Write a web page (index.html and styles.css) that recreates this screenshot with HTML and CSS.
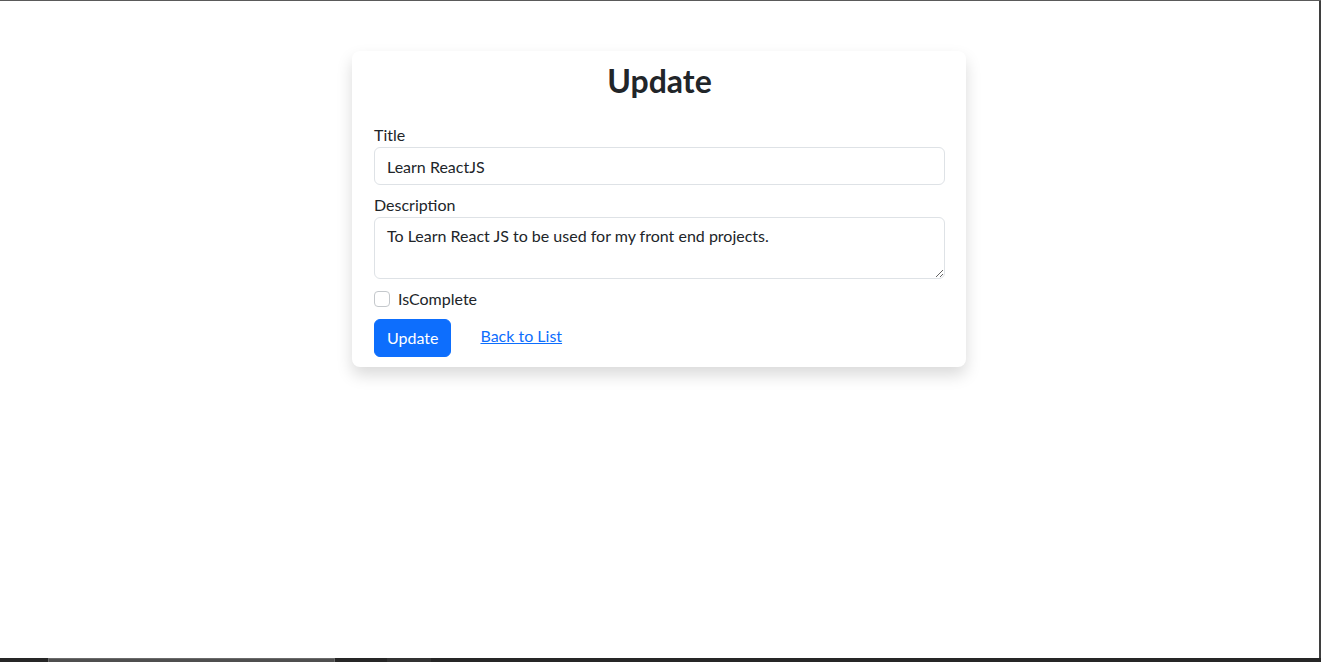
FILE: index.html
```html
<!DOCTYPE html>
<html lang="en">
<head>
<meta charset="utf-8">
<title>Update</title>
<link rel="stylesheet" href="styles.css">
</head>
<body>
<div class="screen">
  <main class="page">
    <section class="card">
      <h2 class="card-title">Update</h2>
      <form class="form">
        <div class="field">
          <label class="label" for="title">Title</label>
          <input class="control" id="title" type="text" value="Learn ReactJS">
        </div>
        <div class="field">
          <label class="label" for="desc">Description</label>
          <textarea class="control area" id="desc">To Learn React JS to be used for my front end projects.</textarea>
        </div>
        <div class="check">
          <input class="check-box" id="done" type="checkbox">
          <label class="check-label" for="done">IsComplete</label>
        </div>
        <div class="actions">
          <button class="btn btn-primary" type="button">Update</button>
          <a class="btn btn-link" href="#">Back to List</a>
        </div>
      </form>
    </section>
  </main>
  <div class="taskbar">
    <span class="seg seg-a"></span>
    <span class="seg seg-b"></span>
    <span class="seg seg-c"></span>
    <span class="seg seg-d"></span>
    <span class="seg seg-e"></span>
  </div>
</div>
</body>
</html>
```
FILE: styles.css
```css
* { box-sizing: border-box; }
html, body { margin: 0; padding: 0; height: 100%; }
body {
  font-family: Lato, "Open Sans", sans-serif;
  font-size: 16px;
  line-height: 1.5;
  color: #212529;
  background: #fff;
}
.screen {
  height: 662px;
  display: flex;
  flex-direction: column;
  border-top: 1px solid #5a5a5a;
}
.page {
  flex: 1;
  display: flex;
  justify-content: center;
  align-items: flex-start;
  border-right: 2px solid #3f3f3f;
  padding-top: 50px;
}
.card {
  width: 614px;
  margin-right: 1px;
  background: #fff;
  border-radius: 8px;
  box-shadow: 0 .5rem 1rem rgba(0,0,0,.15);
  padding: 11px 21px 10px 22px;
}
.card-title {
  margin: 0 0 23px;
  text-align: center;
  font-size: 32px;
  font-weight: 700;
  line-height: 1.2;
}
.form { display: flex; flex-direction: column; }
.field { margin-bottom: 8px; display: flex; flex-direction: column; }
.label { display: block; line-height: 24px; }
.control {
  display: block;
  width: 100%;
  height: 38px;
  padding: 6px 12px;
  font: inherit;
  color: #212529;
  background: #fff;
  border: 1px solid #dee2e6;
  border-radius: 6px;
  outline: none;
}
.area { height: 62px; resize: vertical; }
.check {
  display: flex;
  align-items: center;
  height: 24px;
  margin-bottom: 8px;
}
.check-box {
  appearance: none;
  -webkit-appearance: none;
  width: 16px;
  height: 16px;
  margin: 0 8px 0 0;
  border: 1px solid #c4c8cc;
  border-radius: 4px;
  background: #fff;
}
.check-label { line-height: 24px; }
.actions { display: flex; align-items: center; }
.btn {
  display: inline-block;
  font: inherit;
  line-height: 24px;
  padding: 6px 12px;
  border: 1px solid transparent;
  border-radius: 6px;
}
.btn-primary { background: #0d6efd; border-color: #0d6efd; color: #fff; }
.btn-link { color: #0d6efd; text-decoration: underline; margin-left: 16px; padding-bottom: 8px; padding-top: 4px; }
.taskbar {
  height: 4px;
  display: flex;
  background: #262626;
}
.seg { display: block; height: 4px; }
.seg-a { width: 48px; }
.seg-b { width: 287px; background: #4f4f4f; border-top: 1px solid #6a6a6a; border-left: 1px solid #6a6a6a; border-right: 1px solid #6a6a6a; }
.seg-c { width: 52px; }
.seg-d { width: 44px; background: #333; }
.seg-e { flex: 1; }
```
